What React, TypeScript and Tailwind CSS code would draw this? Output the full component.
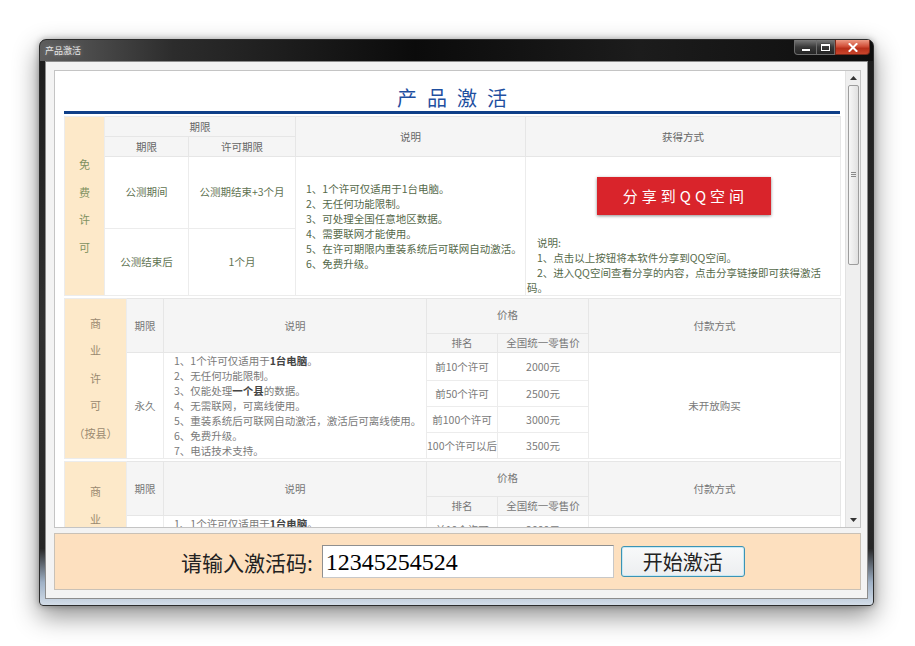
import React from "react";

const t1List = [
  "1、1个许可仅适用于1台电脑。",
  "2、无任何功能限制。",
  "3、可处理全国任意地区数据。",
  "4、需要联网才能使用。",
  "5、在许可期限内重装系统后可联网自动激活。",
  "6、免费升级。",
];

const prices = [
  ["前10个许可", "2000元"],
  ["前50个许可", "2500元"],
  ["前100个许可", "3000元"],
  ["100个许可以后", "3500元"],
];

function CommercialList() {
  return (
    <div className="leading-[15px] text-[#7a7a7a]">
      <div>
        1、1个许可仅适用于<b className="font-bold text-[#444]">1台电脑</b>。
      </div>
      <div>2、无任何功能限制。</div>
      <div>
        3、仅能处理<b className="font-bold text-[#444]">一个县</b>的数据。
      </div>
      <div>4、无需联网，可离线使用。</div>
      <div>5、重装系统后可联网自动激活，激活后可离线使用。</div>
      <div>6、免费升级。</div>
      <div>7、电话技术支持。</div>
    </div>
  );
}

function CommercialTable({ label, topAlign }: { label: string[]; topAlign?: boolean }) {
  return (
    <table className="w-[776px] table-fixed border-collapse text-[10.5px] mt-[2px]">
      <colgroup>
        <col className="w-[62px]" />
        <col className="w-[37px]" />
        <col className="w-[263px]" />
        <col className="w-[71px]" />
        <col className="w-[91px]" />
        <col className="w-[252px]" />
      </colgroup>
      <tbody>
        <tr className="h-[35px]">
          <td
            rowSpan={6}
            className={
              topAlign
                ? "bg-[#fde9c9] border border-[#ececec] text-center align-top pt-[16px] text-[11px] leading-[27.5px] text-[#9a8a70]"
                : "bg-[#fde9c9] border border-[#ececec] text-center align-middle text-[11px] leading-[27.5px] text-[#9a8a70]"
            }
          >
            {label.map((c, i) => (
              <div key={i}>{c}</div>
            ))}
          </td>
          <td rowSpan={2} className="bg-[#f5f5f5] border border-[#e6e6e6] text-center text-[#777]">
            期限
          </td>
          <td rowSpan={2} className="bg-[#f5f5f5] border border-[#e6e6e6] text-center text-[#777]">
            说明
          </td>
          <td colSpan={2} className="bg-[#f5f5f5] border border-[#e6e6e6] text-center text-[#777] pb-[3px]">
            价格
          </td>
          <td rowSpan={2} className="bg-[#f5f5f5] border border-[#e6e6e6] text-center text-[#777]">
            付款方式
          </td>
        </tr>
        <tr className="h-[19px]">
          <td className="bg-[#f5f5f5] border border-[#e6e6e6] text-center text-[#777]">排名</td>
          <td className="bg-[#f5f5f5] border border-[#e6e6e6] text-center text-[#777]">全国统一零售价</td>
        </tr>
        {prices.map(([r, p], i) => (
          <tr key={i} className={i === 0 ? "h-[28px]" : i === 3 ? "h-[26px]" : "h-[26px]"}>
            {i === 0 && (
              <>
                <td rowSpan={4} className="bg-white border border-[#ececec] text-center text-[#7a7a7a]">
                  永久
                </td>
                <td rowSpan={4} className="bg-white border border-[#ececec] pl-[10px] align-middle">
                  <CommercialList />
                </td>
              </>
            )}
            <td className="bg-white border border-[#ececec] text-center text-[#7a7a7a] whitespace-nowrap">{r}</td>
            <td className="bg-white border border-[#ececec] text-center text-[#7a7a7a]">{p}</td>
            {i === 0 && (
              <td rowSpan={4} className="bg-white border border-[#ececec] text-center text-[#7a7a7a]">
                未开放购买
              </td>
            )}
          </tr>
        ))}
      </tbody>
    </table>
  );
}

export default function App() {
  return (
    <div className="w-[915px] h-[646px] bg-white pt-[39px] pl-[39px] overflow-hidden font-['Noto_Sans_CJK_SC',sans-serif]">
      <div className="w-[835px] h-[567px] flex flex-col rounded-t-[7px] rounded-b-[4px] border border-[#2c2c2c] bg-[linear-gradient(to_bottom,#1c1c1c_0%,#303030_50%,#262626_90%,#9fb1c6_96%,#d3dde8_100%)] shadow-[0_10px_26px_rgba(0,0,0,0.45),0_0_6px_rgba(0,0,0,0.3)]">
        {/* Title bar */}
        <div className="h-[21px] flex items-start justify-between rounded-t-[6px] pl-[5px] pr-[3px] bg-[linear-gradient(90deg,#5e5e5e_0%,#2c2c2c_16%,#0b0b0b_45%,#1c1c1c_72%,#0e0e0e_100%)]">
          <span className="mt-[6px] text-[9px] leading-[10px] text-[#e6e6e6] [text-shadow:0_0_4px_rgba(255,255,255,0.35)]">
            产品激活
          </span>
          <div className="flex h-[15px]">
            <div className="w-[23px] h-[15px] rounded-bl-[4px] border border-[#6d6d6d] border-t-0 bg-[linear-gradient(to_bottom,#7a7a7a,#3a3a3a_50%,#252525)] flex items-end justify-center pb-[3px]">
              <div className="w-[8px] h-[2px] bg-white shadow-[0_0_1px_#000]" />
            </div>
            <div className="w-[18px] h-[15px] border-r border-b border-[#6d6d6d] bg-[linear-gradient(to_bottom,#7a7a7a,#3a3a3a_50%,#252525)] flex items-center justify-center">
              <div className="w-[9px] h-[7px] border border-white border-t-2 shadow-[0_0_1px_#000]" />
            </div>
            <div className="w-[35px] h-[15px] rounded-br-[4px] border border-t-0 border-[#7a2a1a] bg-[linear-gradient(to_bottom,#ee9a84,#d2513a_45%,#b8301a_60%,#c9452c)] flex items-center justify-center">
              <svg width="10" height="9" viewBox="0 0 10 9">
                <path d="M1.5 1 L8.5 8 M8.5 1 L1.5 8" stroke="#fff" strokeWidth="2" strokeLinecap="square" />
              </svg>
            </div>
          </div>
        </div>

        {/* Client area */}
        <div className="h-[538px] mx-[5px] bg-[#f3f3f3] border border-[#8c8c8c] pt-[8px] pl-[8px] pr-[6px] flex flex-col">
          {/* Browser-like content panel */}
          <div className="h-[458px] bg-white border border-[#c4c4c4] flex">
            <div className="w-[790px] h-[456px] overflow-hidden pl-[9px]">
              <div className="w-[776px] mt-[15px] h-[24px] text-center text-[20px] leading-[24px] tracking-[10px] pl-[10px] text-[#1f4f9f]">
                产品激活
              </div>
              <div className="w-[776px] h-[3px] mt-[1px] bg-[#0f3f88]" />

              {/* Table 1: free license */}
              <table className="w-[776px] table-fixed border-collapse text-[10.5px] mt-[2px]">
                <colgroup>
                  <col className="w-[40px]" />
                  <col className="w-[84px]" />
                  <col className="w-[107px]" />
                  <col className="w-[230px]" />
                  <col className="w-[315px]" />
                </colgroup>
                <tbody>
                  <tr className="h-[20px]">
                    <td
                      rowSpan={4}
                      className="bg-[#fde9c9] border border-[#ececec] text-center text-[11px] leading-[27.5px] text-[#7f9160]"
                    >
                      <div>免</div>
                      <div>费</div>
                      <div>许</div>
                      <div>可</div>
                    </td>
                    <td colSpan={2} className="bg-[#f5f5f5] border border-[#e6e6e6] text-center text-[#666]">
                      期限
                    </td>
                    <td rowSpan={2} className="bg-[#f5f5f5] border border-[#e6e6e6] text-center text-[#666]">
                      说明
                    </td>
                    <td rowSpan={2} className="bg-[#f5f5f5] border border-[#e6e6e6] text-center text-[#666]">
                      获得方式
                    </td>
                  </tr>
                  <tr className="h-[20px]">
                    <td className="bg-[#f5f5f5] border border-[#e6e6e6] text-center text-[#666]">期限</td>
                    <td className="bg-[#f5f5f5] border border-[#e6e6e6] text-center text-[#666]">许可期限</td>
                  </tr>
                  <tr className="h-[70px]">
                    <td className="bg-white border border-[#ececec] text-center text-[#5f7352]">公测期间</td>
                    <td className="bg-white border border-[#ececec] text-center text-[#5f7352]">公测期结束+3个月</td>
                    <td rowSpan={2} className="bg-white border border-[#ececec] pl-[10px] align-middle">
                      <div className="leading-[15px] text-[#55694a]">
                        {t1List.map((l, i) => (
                          <div key={i}>{l}</div>
                        ))}
                      </div>
                    </td>
                    <td rowSpan={2} className="bg-white border border-[#ececec] align-top pt-[20px] pl-[1px]">
                      <div className="mx-auto w-[174px] h-[38px] bg-[#d9242b] text-white text-[15px] tracking-[4px] pl-[4px] flex items-center justify-center shadow-[0_1px_3px_rgba(0,0,0,0.45)]">
                        分享到QQ空间
                      </div>
                      <div className="mt-[20px] leading-[15px] text-[#55694a] whitespace-nowrap">
                        <div className="pl-[10px]">说明:</div>
                        <div className="pl-[10px]">1、点击以上按钮将本软件分享到QQ空间。</div>
                        <div className="pl-[10px]">2、进入QQ空间查看分享的内容，点击分享链接即可获得激活</div>
                        <div>码。</div>
                      </div>
                    </td>
                  </tr>
                  <tr className="h-[66px]">
                    <td className="bg-white border border-[#ececec] text-center text-[#5f7352]">公测结束后</td>
                    <td className="bg-white border border-[#ececec] text-center text-[#5f7352]">1个月</td>
                  </tr>
                </tbody>
              </table>

              <CommercialTable label={["商", "业", "许", "可", "（按县）"]} />
              <CommercialTable label={["商", "业", "许", "可", "（按市）"]} topAlign />
            </div>

            {/* Scrollbar */}
            <div className="w-[15px] h-[456px] bg-[#efefef] border-l border-[#e2e2e2] flex flex-col items-center">
              <div className="h-[14px] w-full flex items-center justify-center">
                <svg width="7" height="4" viewBox="0 0 7 4">
                  <path d="M0 4 L3.5 0 L7 4 Z" fill="#333" />
                </svg>
              </div>
              <div className="w-[11px] h-[180px] rounded-[2px] border border-[#9d9d9d] bg-[linear-gradient(90deg,#f7f7f7,#e0e0e0)] flex items-center justify-center">
                <svg width="5" height="6" viewBox="0 0 5 6">
                  <path d="M0 0.5 H5 M0 2.5 H5 M0 4.5 H5" stroke="#8a8a8a" strokeWidth="1" />
                </svg>
              </div>
              <div className="flex-1" />
              <div className="h-[14px] w-full flex items-center justify-center">
                <svg width="7" height="4" viewBox="0 0 7 4">
                  <path d="M0 0 L3.5 4 L7 0 Z" fill="#333" />
                </svg>
              </div>
            </div>
          </div>

          {/* Activation bar */}
          <div className="mt-[5px] h-[57px] bg-[#fde0bf] border border-[#c9c1b6] flex items-center pl-[126px]">
            <span className="text-[21px] leading-[24px] text-[#222]">请输入激活码:</span>
            <div className="ml-[9px] w-[292px] h-[33px] bg-white border border-[#8f8f8f] border-b-[#c8c8c8] border-r-[#c8c8c8] pl-[3px] flex items-center font-['Liberation_Serif',serif] text-[24px] text-black">
              12345254524
            </div>
            <div className="ml-[7px] w-[124px] h-[31px] rounded-[3px] border border-[#3c93b4] bg-[linear-gradient(to_bottom,#f8f9fa,#eceef0)] shadow-[inset_0_0_0_1px_#c6e9f5] flex items-center justify-center text-[20px] text-[#222]">
              开始激活
            </div>
          </div>
        </div>
      </div>
    </div>
  );
}
